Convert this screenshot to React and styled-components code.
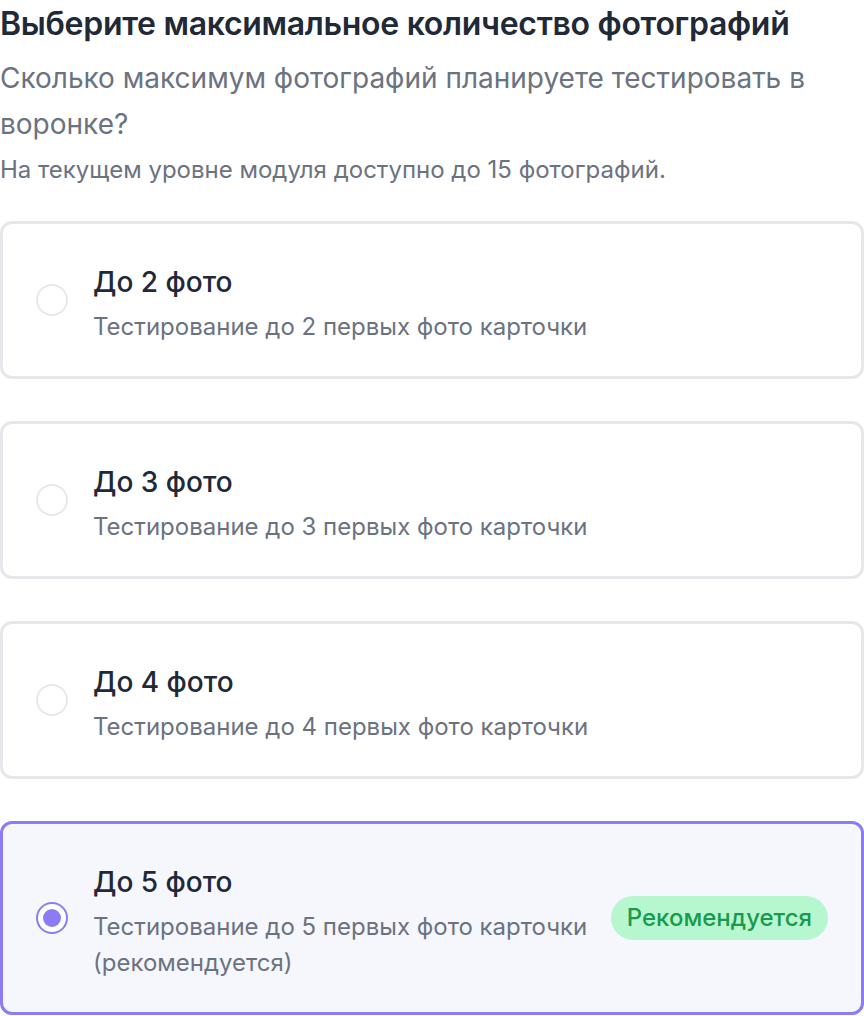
import styled, { createGlobalStyle } from 'styled-components'
import { useState } from 'react'

const Global = createGlobalStyle`
  body {
    margin: 0;
    background: #ffffff;
    font-family: Inter, "Noto Sans", sans-serif;
  }
`

const Page = styled.div`
  width: 864px;
  padding-top: 2px;
`

const Heading = styled.h1`
  margin: 0;
  font-size: 32px;
  line-height: 44px;
  font-weight: 600;
  color: #1f2937;
  letter-spacing: -0.3px;
`

const Subtitle = styled.p`
  margin: 9px 0 0;
  font-size: 28px;
  line-height: 46px;
  color: #6b7280;
`

const Note = styled.p`
  margin: 3px 0 0;
  font-size: 24px;
  line-height: 40px;
  color: #6b7280;
`

const List = styled.div`
  display: flex;
  flex-direction: column;
  gap: 42px;
  margin-top: 31px;
`

const Card = styled.label`
  display: flex;
  align-items: center;
  gap: 25px;
  padding: 36px 33px 31px;
  border: 3px solid ${p => (p.$active ? '#8b7cf6' : '#e5e7eb')};
  background: ${p => (p.$active ? '#f6f6fd' : '#ffffff')};
  border-radius: 12px;
  cursor: pointer;
`

const Radio = styled.span`
  flex: none;
  width: 32px;
  height: 32px;
  margin-bottom: 5px;
  box-sizing: border-box;
  border-radius: 50%;
  border: 2px solid ${p => (p.$checked ? '#8b7cf6' : '#e5e7eb')};
  background: #ffffff;
  display: flex;
  align-items: center;
  justify-content: center;

  &::after {
    content: '';
    display: ${p => (p.$checked ? 'block' : 'none')};
    width: 18px;
    height: 18px;
    border-radius: 50%;
    background: #8b7cf6;
  }
`

const Body = styled.div`
  flex: 1;
  display: flex;
  align-items: center;
  gap: 22px;
`

const Texts = styled.div`
  display: flex;
  flex-direction: column;
  gap: 5px;
  flex: 1;
`

const Title = styled.div`
  font-size: 28px;
  line-height: 44px;
  font-weight: 500;
  color: #1f2937;
`

const Desc = styled.div`
  font-size: 24px;
  line-height: 36px;
  color: #6b7280;
`

const Badge = styled.span`
  flex: none;
  margin-bottom: 5px;
  padding: 6px 16px;
  border-radius: 999px;
  background: #b7f7cf;
  color: #1a9a4e;
  font-size: 24px;
  line-height: 32px;
  font-weight: 500;
`

const options = [
  { n: 2, desc: 'Тестирование до 2 первых фото карточки' },
  { n: 3, desc: 'Тестирование до 3 первых фото карточки' },
  { n: 4, desc: 'Тестирование до 4 первых фото карточки' },
  { n: 5, desc: 'Тестирование до 5 первых фото карточки (рекомендуется)', recommended: true },
]

export default function App() {
  const [selected, setSelected] = useState(5)

  return (
    <Page>
      <Global />
      <Heading>Выберите максимальное количество фотографий</Heading>
      <Subtitle>Сколько максимум фотографий планируете тестировать в воронке?</Subtitle>
      <Note>На текущем уровне модуля доступно до 15 фотографий.</Note>
      <List>
        {options.map(o => (
          <Card key={o.n} $active={selected === o.n} onClick={() => setSelected(o.n)}>
            <Radio $checked={selected === o.n} />
            <Body>
              <Texts>
                <Title>До {o.n} фото</Title>
                <Desc>{o.desc}</Desc>
              </Texts>
              {o.recommended && <Badge>Рекомендуется</Badge>}
            </Body>
          </Card>
        ))}
      </List>
    </Page>
  )
}
